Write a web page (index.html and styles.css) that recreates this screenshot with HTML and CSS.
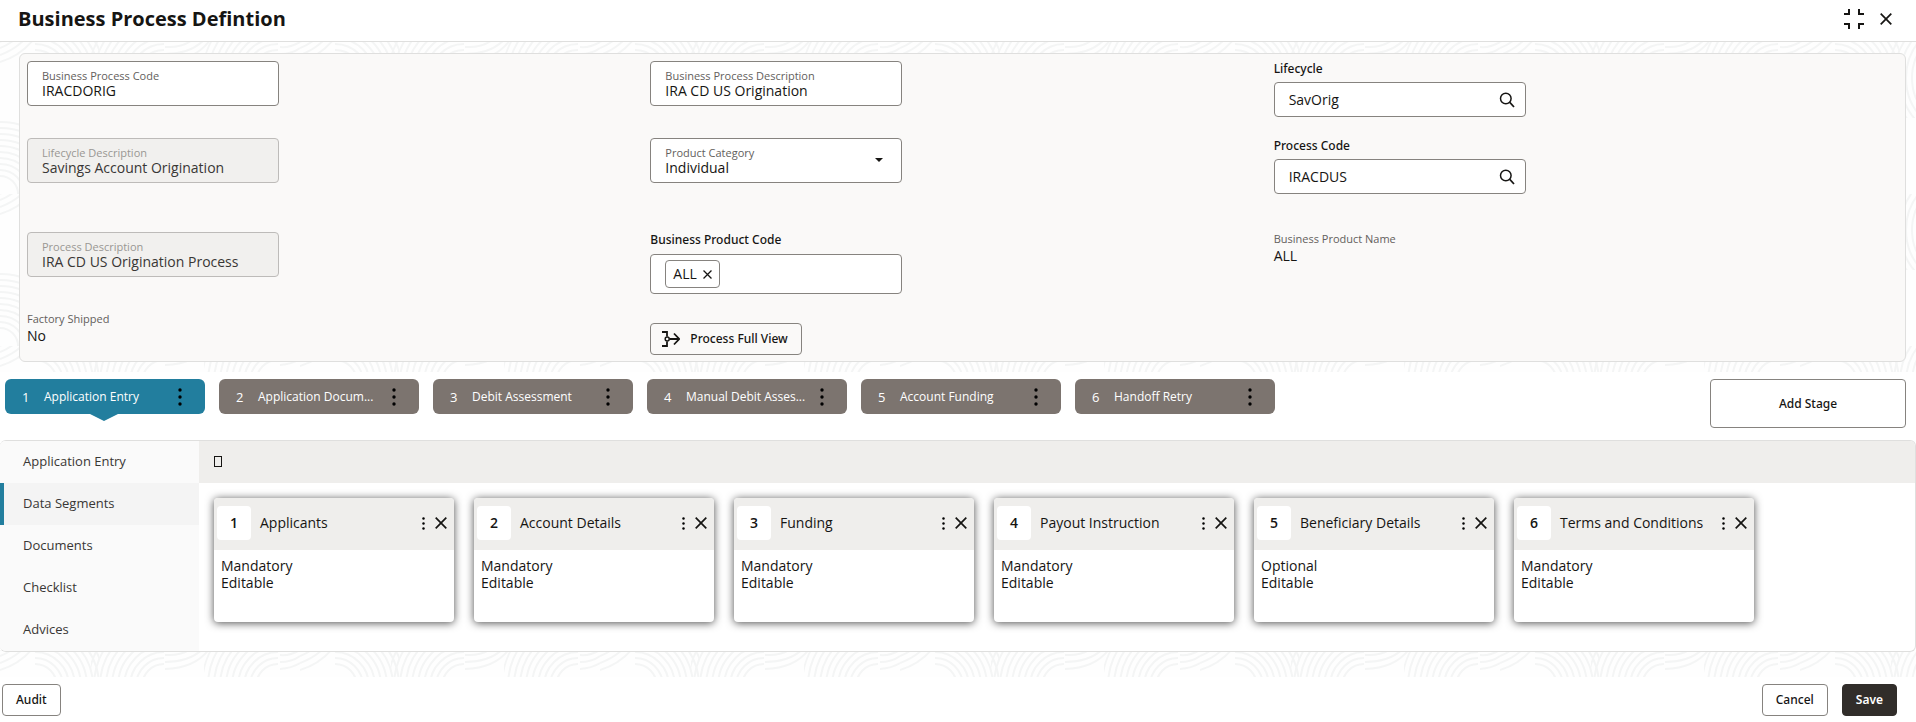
FILE: index.html
```html
<!DOCTYPE html>
<html lang="en">
<head>
<meta charset="utf-8">
<title>Business Process Defintion</title>
<link rel="stylesheet" href="styles.css">
</head>
<body>
<svg class="sprite" aria-hidden="true">
  <symbol id="i-search" viewBox="0 0 16 16"><circle cx="6.8" cy="6.5" r="5.3" fill="none" stroke="currentColor" stroke-width="1.5"/><path d="M10.8 10.4 15 15" fill="none" stroke="currentColor" stroke-width="1.7"/></symbol>
  <symbol id="i-close" viewBox="0 0 12 12"><path d="M.7.7 11.3 11.3M11.3.7.7 11.3" fill="none" stroke="currentColor" stroke-width="1.7"/></symbol>
  <symbol id="i-dots" viewBox="0 0 4 18"><circle cx="2" cy="2" r="1.7"/><circle cx="2" cy="9" r="1.7"/><circle cx="2" cy="16" r="1.7"/></symbol>
  <symbol id="i-collapse" viewBox="0 0 20 20"><path d="M0 5H5V0M15 0V5H20M0 15H5V20M15 20V15H20" fill="none" stroke="currentColor" stroke-width="2"/></symbol>
  <symbol id="i-flow" viewBox="0 0 18 16"><path d="M0 1H5V5.500M0 15H5V10.500M7.500 8H17M12 2.500 17.200 8 12 13.500" fill="none" stroke="currentColor" stroke-width="1.8"/><circle cx="5.200" cy="8" r="2" fill="none" stroke="currentColor" stroke-width="1.500"/></symbol>
</svg>

<header class="topbar">
  <h1 class="title">Business Process Defintion</h1>
  <div class="topbar-actions">
    <button class="icon-btn" type="button" aria-label="Collapse"><svg width="20" height="20"><use href="#i-collapse"/></svg></button>
    <button class="icon-btn" type="button" aria-label="Close"><svg width="12" height="12"><use href="#i-close"/></svg></button>
  </div>
</header>

<main class="content">
  <section class="form-wrap">
    <form class="form">
      <div class="cell">
        <div class="field"><label for="bpc">Business Process Code</label><input id="bpc" type="text" value="IRACDORIG"></div>
      </div>
      <div class="cell">
        <div class="field"><label for="bpd">Business Process Description</label><input id="bpd" type="text" value="IRA CD US Origination"></div>
      </div>
      <div class="cell cell-top">
        <label class="top-label" for="lc">Lifecycle</label>
        <div class="search"><input id="lc" type="text" value="SavOrig"><button class="icon-btn" type="button" aria-label="Search lifecycle"><svg width="16" height="16"><use href="#i-search"/></svg></button></div>
      </div>

      <div class="cell">
        <div class="field disabled"><label for="ld">Lifecycle Description</label><input id="ld" type="text" value="Savings Account Origination" readonly></div>
      </div>
      <div class="cell">
        <div class="field has-select"><label for="pc">Product Category</label><select id="pc"><option>Individual</option></select></div>
      </div>
      <div class="cell cell-top">
        <label class="top-label" for="prc">Process Code</label>
        <div class="search"><input id="prc" type="text" value="IRACDUS"><button class="icon-btn" type="button" aria-label="Search process code"><svg width="16" height="16"><use href="#i-search"/></svg></button></div>
      </div>

      <div class="cell">
        <div class="field disabled"><label for="pd">Process Description</label><input id="pd" type="text" value="IRA CD US Origination Process" readonly></div>
      </div>
      <div class="cell">
        <label class="top-label" for="bprc">Business Product Code</label>
        <div class="chips"><span class="chip">ALL<button class="icon-btn" type="button" aria-label="Remove ALL"><svg width="9" height="9"><use href="#i-close"/></svg></button></span><input id="bprc" type="text"></div>
      </div>
      <div class="cell readout">
        <span class="small">Business Product Name</span>
        <span class="value">ALL</span>
      </div>

      <div class="cell readout">
        <span class="small">Factory Shipped</span>
        <span class="value">No</span>
      </div>
      <div class="cell cell-button">
        <button class="btn btn-flow" type="button"><svg width="18" height="16"><use href="#i-flow"/></svg>Process Full View</button>
      </div>
    </form>
  </section>

  <section class="stages">
    <ol class="stage-list">
      <li class="stage active"><span class="num">1</span><span class="name">Application Entry</span><button class="icon-btn" type="button" aria-label="Stage menu"><svg width="4" height="18"><use href="#i-dots"/></svg></button></li>
      <li class="stage"><span class="num">2</span><span class="name">Application Docum...</span><button class="icon-btn" type="button" aria-label="Stage menu"><svg width="4" height="18"><use href="#i-dots"/></svg></button></li>
      <li class="stage"><span class="num">3</span><span class="name">Debit Assessment</span><button class="icon-btn" type="button" aria-label="Stage menu"><svg width="4" height="18"><use href="#i-dots"/></svg></button></li>
      <li class="stage"><span class="num">4</span><span class="name">Manual Debit Asses...</span><button class="icon-btn" type="button" aria-label="Stage menu"><svg width="4" height="18"><use href="#i-dots"/></svg></button></li>
      <li class="stage"><span class="num">5</span><span class="name">Account Funding</span><button class="icon-btn" type="button" aria-label="Stage menu"><svg width="4" height="18"><use href="#i-dots"/></svg></button></li>
      <li class="stage"><span class="num">6</span><span class="name">Handoff Retry</span><button class="icon-btn" type="button" aria-label="Stage menu"><svg width="4" height="18"><use href="#i-dots"/></svg></button></li>
    </ol>
    <button class="btn btn-add" type="button">Add Stage</button>
  </section>

  <section class="panel">
    <nav class="side">
      <a href="#entry">Application Entry</a>
      <a class="selected" href="#segments">Data Segments</a>
      <a href="#documents">Documents</a>
      <a href="#checklist">Checklist</a>
      <a href="#advices">Advices</a>
    </nav>
    <div class="segments">
      <div class="toolbar"><button class="glyph" type="button" aria-label="Add segment"></button></div>
      <div class="cards">
        <article class="card"><header><span class="badge">1</span><h2>Applicants</h2><button class="icon-btn" type="button" aria-label="Menu"><svg width="3" height="13"><use href="#i-dots"/></svg></button><button class="icon-btn" type="button" aria-label="Remove"><svg width="12" height="12"><use href="#i-close"/></svg></button></header><p>Mandatory<br>Editable</p></article>
        <article class="card"><header><span class="badge">2</span><h2>Account Details</h2><button class="icon-btn" type="button" aria-label="Menu"><svg width="3" height="13"><use href="#i-dots"/></svg></button><button class="icon-btn" type="button" aria-label="Remove"><svg width="12" height="12"><use href="#i-close"/></svg></button></header><p>Mandatory<br>Editable</p></article>
        <article class="card"><header><span class="badge">3</span><h2>Funding</h2><button class="icon-btn" type="button" aria-label="Menu"><svg width="3" height="13"><use href="#i-dots"/></svg></button><button class="icon-btn" type="button" aria-label="Remove"><svg width="12" height="12"><use href="#i-close"/></svg></button></header><p>Mandatory<br>Editable</p></article>
        <article class="card"><header><span class="badge">4</span><h2>Payout Instruction</h2><button class="icon-btn" type="button" aria-label="Menu"><svg width="3" height="13"><use href="#i-dots"/></svg></button><button class="icon-btn" type="button" aria-label="Remove"><svg width="12" height="12"><use href="#i-close"/></svg></button></header><p>Mandatory<br>Editable</p></article>
        <article class="card"><header><span class="badge">5</span><h2>Beneficiary Details</h2><button class="icon-btn" type="button" aria-label="Menu"><svg width="3" height="13"><use href="#i-dots"/></svg></button><button class="icon-btn" type="button" aria-label="Remove"><svg width="12" height="12"><use href="#i-close"/></svg></button></header><p>Optional<br>Editable</p></article>
        <article class="card"><header><span class="badge">6</span><h2>Terms and Conditions</h2><button class="icon-btn" type="button" aria-label="Menu"><svg width="3" height="13"><use href="#i-dots"/></svg></button><button class="icon-btn" type="button" aria-label="Remove"><svg width="12" height="12"><use href="#i-close"/></svg></button></header><p>Mandatory<br>Editable</p></article>
      </div>
    </div>
  </section>
</main>

<footer class="footer">
  <button class="btn" type="button">Audit</button>
  <div class="footer-right">
    <button class="btn" type="button">Cancel</button>
    <button class="btn btn-primary" type="button">Save</button>
  </div>
</footer>
</body>
</html>
```
FILE: styles.css
```css
* { box-sizing: border-box; }
body {
  margin: 0;
  background: #fff;
  color: #161513;
  font: 14px/18px "Open Sans", "Noto Sans", sans-serif;
}
h1, h2, p, ol { margin: 0; padding: 0; }
button, input, select { font: inherit; color: inherit; }
.sprite { position: absolute; width: 0; height: 0; }
.icon-btn {
  display: flex;
  align-items: center;
  justify-content: center;
  padding: 0;
  border: 0;
  background: none;
  cursor: pointer;
}

.topbar {
  display: flex;
  align-items: center;
  justify-content: space-between;
  height: 42px;
  padding: 0 24px 4px 18px;
  border-bottom: 1px solid #dfdfde;
}
.title { font-size: 20px; line-height: 28px; font-weight: 700; }
.topbar-actions { display: flex; align-items: center; gap: 16px; }

.content {
  padding-bottom: 25px;
  background-color: #fefefe;
  background-image: url("data:image/svg+xml,%3Csvg xmlns='http://www.w3.org/2000/svg' width='300' height='152'%3E%3Cdefs%3E%3CclipPath id='a'%3E%3Crect x='35' width='64' height='76'/%3E%3C/clipPath%3E%3CclipPath id='e'%3E%3Crect x='91' width='73' height='76'/%3E%3C/clipPath%3E%3CclipPath id='b'%3E%3Crect x='204' width='74' height='76'/%3E%3C/clipPath%3E%3CclipPath id='c'%3E%3Crect y='76' width='150' height='76'/%3E%3C/clipPath%3E%3CclipPath id='d'%3E%3Crect x='150' y='76' width='150' height='76'/%3E%3C/clipPath%3E%3C/defs%3E%3Cg fill='none' stroke='%23f4f5f5' stroke-width='2'%3E%3Cg clip-path='url(%23a)'%3E%3Ccircle cx='35' cy='36' r='22'/%3E%3Ccircle cx='35' cy='36' r='28'/%3E%3Ccircle cx='35' cy='36' r='34'/%3E%3Ccircle cx='35' cy='36' r='40'/%3E%3Ccircle cx='35' cy='36' r='46'/%3E%3Ccircle cx='35' cy='36' r='52'/%3E%3Ccircle cx='35' cy='36' r='58'/%3E%3Ccircle cx='35' cy='36' r='64'/%3E%3Ccircle cx='35' cy='36' r='70'/%3E%3C/g%3E%3Cg clip-path='url(%23e)'%3E%3Ccircle cx='164' cy='36' r='22'/%3E%3Ccircle cx='164' cy='36' r='28'/%3E%3Ccircle cx='164' cy='36' r='34'/%3E%3Ccircle cx='164' cy='36' r='40'/%3E%3Ccircle cx='164' cy='36' r='46'/%3E%3Ccircle cx='164' cy='36' r='52'/%3E%3Ccircle cx='164' cy='36' r='58'/%3E%3Ccircle cx='164' cy='36' r='64'/%3E%3Ccircle cx='164' cy='36' r='70'/%3E%3Ccircle cx='164' cy='36' r='76'/%3E%3C/g%3E%3Cg clip-path='url(%23b)'%3E%3Ccircle cx='278' cy='36' r='22'/%3E%3Ccircle cx='278' cy='36' r='28'/%3E%3Ccircle cx='278' cy='36' r='34'/%3E%3Ccircle cx='278' cy='36' r='40'/%3E%3Ccircle cx='278' cy='36' r='46'/%3E%3Ccircle cx='278' cy='36' r='52'/%3E%3Ccircle cx='278' cy='36' r='58'/%3E%3Ccircle cx='278' cy='36' r='64'/%3E%3Ccircle cx='278' cy='36' r='70'/%3E%3Ccircle cx='278' cy='36' r='76'/%3E%3C/g%3E%3Cpath d='M165 5Q182 6 192 -2M165 12Q190 12 204 -2M165 19Q196 18 210 -2M280 5Q290 6 300 0M280 12Q292 12 300 6M280 19Q292 18 300 13M0 0L3 -2M0 6Q8 3 14 -2M0 13Q14 8 24 -2M0 20Q20 14 33 -2'/%3E%3Cg clip-path='url(%23c)'%3E%3Ccircle cy='152' r='18'/%3E%3Ccircle cy='152' r='24'/%3E%3Ccircle cy='152' r='30'/%3E%3Ccircle cy='152' r='36'/%3E%3Ccircle cy='152' r='42'/%3E%3Ccircle cy='152' r='48'/%3E%3Ccircle cy='152' r='54'/%3E%3Ccircle cy='152' r='60'/%3E%3Ccircle cy='152' r='66'/%3E%3Ccircle cy='152' r='72'/%3E%3C/g%3E%3Cg clip-path='url(%23d)'%3E%3Ccircle cx='300' cy='152' r='18'/%3E%3Ccircle cx='300' cy='152' r='26'/%3E%3Ccircle cx='300' cy='152' r='34'/%3E%3Ccircle cx='300' cy='152' r='42'/%3E%3Ccircle cx='300' cy='152' r='50'/%3E%3Ccircle cx='300' cy='152' r='58'/%3E%3C/g%3E%3C/g%3E%3C/svg%3E");
}

.form-wrap { padding: 11px 10px 10px 19px; }
.form {
  display: grid;
  grid-template-columns: repeat(3, 1fr);
  grid-template-rows: 77px 94px 80px auto;
  padding: 7px 8px 6px 7px;
  border: 1px solid #dfdfde;
  border-radius: 6px;
  background: #faf9f8;
}
.field {
  position: relative;
  display: flex;
  flex-direction: column;
  width: 252px;
  height: 45px;
  padding: 8px 14px 0;
  border: 1px solid #86837f;
  border-radius: 4px;
  background: #fff;
}
.field label, .small { color: #63605c; font-size: 11px; line-height: 12px; }
.field input, .field select {
  width: 100%;
  height: 18px;
  padding: 0;
  border: 0;
  outline: 0;
  background: none;
  line-height: 18px;
  appearance: none;
}
.field.disabled { background: #f1f0ee; border-color: #bdbbb9; }
.field.disabled label { color: #999793; }
.field.disabled input { color: #393735; }
.has-select::after {
  content: "";
  position: absolute;
  right: 18px;
  top: 19px;
  border: 4px solid transparent;
  border-top-color: #161513;
  border-bottom: 0;
  pointer-events: none;
}
.top-label {
  display: block;
  margin-bottom: 6px;
  font: 500 12px/16px "Noto Sans", sans-serif;
}
.cell-top .top-label { margin-bottom: 5px; }
.search, .chips {
  display: flex;
  align-items: center;
  width: 252px;
  border: 1px solid #86837f;
  border-radius: 4px;
  background: #fff;
}
.search { height: 35px; padding: 0 10px 0 14px; }
.search input, .chips input { flex: 1; min-width: 0; padding: 0; border: 0; outline: 0; background: none; }
.chips { height: 40px; padding: 0 14px; }
.chip {
  display: flex;
  align-items: center;
  gap: 6px;
  height: 28px;
  padding: 0 7px;
  border: 1px solid #86837f;
  border-radius: 4px;
}
.readout { display: flex; flex-direction: column; padding-top: 1px; }
.readout .value { line-height: 22px; }
.cell-button { padding-top: 11px; }

.btn {
  display: inline-flex;
  align-items: center;
  justify-content: center;
  height: 32px;
  padding: 0 13px;
  border: 1px solid #86837f;
  border-radius: 4px;
  background: #fff;
  font: 500 12px/18px "Noto Sans", sans-serif;
  cursor: pointer;
}
.btn-flow { gap: 10px; padding: 0 13px 0 11px; background: none; }
.btn-add { width: 196px; height: 49px; }
.btn-primary { border-color: #312d2a; background: #312d2a; color: #fff; font-weight: 600; }

.stages {
  display: flex;
  align-items: flex-start;
  justify-content: space-between;
  padding: 7px 10px 12px 5px;
  background: #fff;
}
.stage-list { display: flex; gap: 14px; list-style: none; }
.stage {
  position: relative;
  display: flex;
  align-items: center;
  width: 200px;
  height: 35px;
  padding: 0 23px 0 17px;
  border-radius: 6px;
  background: #7c746f;
  color: #fff;
  font-size: 12px;
  font-weight: 500;
}
.stage .num { width: 22px; font-size: 13px; }
.stage .name { flex: 1; white-space: nowrap; }
.stage .icon-btn { color: #161513; }
.stage.active { background: #227e9e; }
.stage.active::after {
  content: "";
  position: absolute;
  left: 85px;
  top: 35px;
  border: 14px solid transparent;
  border-top: 7px solid #227e9e;
  border-bottom: 0;
}

.panel {
  display: flex;
  border: 1px solid #dfdfde;
  border-left: 0;
  border-radius: 6px;
  background: #fff;
  overflow: hidden;
}
.side { flex: none; width: 199px; background: #fafafa; }
.side a {
  display: block;
  height: 42px;
  padding: 0 19px;
  border-left: 4px solid transparent;
  color: #393735;
  font-size: 13px;
  font-weight: 500;
  line-height: 40px;
  text-decoration: none;
}
.side .selected { border-color: #227e9e; background: #f4f4f4; }
.segments { flex: 1; }
.toolbar { display: flex; align-items: center; height: 42px; padding: 0 15px 2px; background: #efeeec; }
.glyph { width: 8px; height: 11px; padding: 0; border: 1px solid #161513; background: none; }
.cards { display: flex; flex-wrap: wrap; gap: 20px; padding: 15px; }
.card {
  width: 240px;
  height: 124px;
  border-radius: 4px;
  background: #fff;
  box-shadow: 0 1px 8px rgba(0, 0, 0, 0.7);
  overflow: hidden;
}
.card header { display: flex; align-items: center; height: 52px; padding: 0 7px 2px 3px; background: #efeeec; }
.card .badge {
  width: 34px;
  height: 34px;
  border-radius: 4px;
  background: #fff;
  font-weight: 600;
  line-height: 34px;
  text-align: center;
}
.card h2 { flex: 1; padding-left: 9px; font-size: 14px; font-weight: 400; white-space: nowrap; }
.card .icon-btn + .icon-btn { margin-left: 10px; }
.card p { padding: 7px; line-height: 17px; }

.footer { display: flex; justify-content: space-between; padding: 7px 19px 6px 2px; }
.footer-right { display: flex; gap: 14px; }
```
